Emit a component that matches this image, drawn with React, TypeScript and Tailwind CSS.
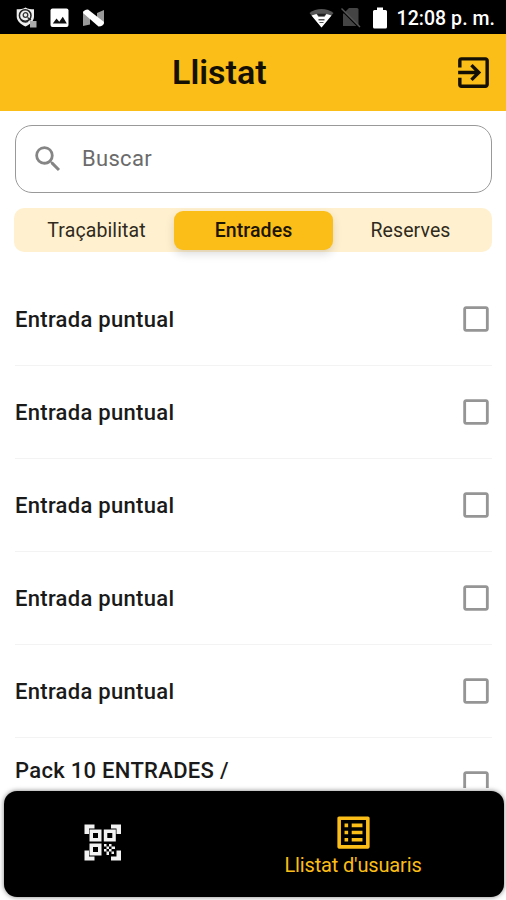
import React from 'react';
import { MdCheckBoxOutlineBlank, MdExitToApp, MdListAlt, MdSearch } from 'react-icons/md';

const tickets = [
  'Entrada puntual',
  'Entrada puntual',
  'Entrada puntual',
  'Entrada puntual',
  'Entrada puntual',
];

const StatusBar: React.FC = () => (
  <div className="flex h-[34px] shrink-0 items-center justify-between bg-black pl-4 pr-[11px] pt-px text-white">
    <div className="flex items-center">
      {/* security shield */}
      <svg className="mt-px h-[22px] w-[22px]" viewBox="0 0 22 22" fill="none">
        <path d="M9.500 0.500C7 2 4 2.200 0.700 2.200v7.500c0 4.300 4.500 7.800 8.800 9.800 4.300-2 8.500-5.500 8.500-9.800V2.200C15 2.200 12 2 9.500 0.500z" fill="#eee" />
        <circle cx="9.200" cy="8.500" r="5.800" stroke="#222" strokeWidth="1.500" />
        <circle cx="9.500" cy="8" r="2.300" stroke="#333" strokeWidth="1.300" />
        <path d="M5 13c2.500 2.500 5 2.500 7 1.500M11.500 10.500l3.500 2.500" stroke="#222" strokeWidth="1.300" />
        <path d="M14 14h6.500v6.500H14z" fill="#aaa" />
      </svg>
      {/* gallery */}
      <svg className="ml-3 h-[20px] w-[20px]" viewBox="0 0 20 20">
        <rect x="0.500" y="0.500" width="18" height="18.500" rx="2" fill="#fff" />
        <path d="M2.800 15.500l3.700-5 2.800 3.200 3.500-5 4 6.800z" fill="#111" />
      </svg>
      {/* Android N */}
      <svg className="ml-[13px] h-[18px] w-[22px]" viewBox="0 0 22 18">
        <path d="M0 2l7 4v9.500L0 17zM14 4l7-3v14.500l-7-3z" fill="#9a9a9a" />
        <path d="M0 4Q0.500 0.500 5 0.500L21 13Q20.500 17.500 15.500 17.500z" fill="#fff" />
      </svg>
    </div>
    <div className="flex items-center">
      {/* wifi */}
      <svg className="h-[20px] w-[25px]" viewBox="0 0 25 20">
        <path d="M0.500 5C7-0.300 18-0.300 24.500 5L12.500 19.500z" fill="#555" />
        <path d="M2.500 7.500L7.500 6l2 2.800h6l2-2.800 5 1.500-10 12z" fill="#fff" />
        <path d="M8 5.800L9.800 8h5.400L17 5.800" fill="#222" />
        <path d="M9.500 11h6v1.500h-6zM10.500 14h4v1h-4z" fill="#555" />
      </svg>
      {/* no sim */}
      <svg className="ml-[7px] h-[21px] w-[20px]" viewBox="0 0 20 21">
        <path d="M8 1h8q1.500 0 1.500 1.500V19H2V7z" fill="#444" />
        <path d="M0.500 3L18.500 21" stroke="#000" strokeWidth="1.500" />
        <path d="M0.500 1.500L19 20" stroke="#555" strokeWidth="1.500" />
      </svg>
      {/* battery */}
      <svg className="ml-[12px] h-[22px] w-[14px]" viewBox="0 0 14 22">
        <path d="M4 0.500h6V3h2.500q1.500 0 1.500 1.500V20q0 1.500-1.500 1.500h-11Q0 21.500 0 20V4.500Q0 3 1.500 3H4z" fill="#fff" />
      </svg>
      <span className="ml-[10px] mt-[3px] whitespace-nowrap text-[19.5px] font-medium leading-none tracking-[0.05px]">12:08 p. m.</span>
    </div>
  </div>
);

const Header: React.FC = () => (
  <div className="flex h-[77px] shrink-0 items-center bg-[#fbbd17] pl-[172px] pr-[12px]">
    <h1 className="-mt-px flex-1 text-[34px] font-semibold leading-none text-[#141003]">Llistat</h1>
    <MdExitToApp className="h-[41px] w-[41px] text-[#141003]" />
  </div>
);

const QrIcon: React.FC = () => (
  <svg className="mb-[3px] h-[37px] w-[38px]" viewBox="0 0 38 37" fill="#f2f2f2">
    <path d="M0.500 0.500H10.500V4.500H5V10h-4.500zM27 0.500H37V10h-4.500V4.500H27zM0.500 26.500H5V32.500H10.500v4H0.500zM32.500 26.500H37v10H27v-4h5.500z" />
    <path fillRule="evenodd" d="M5.500 5.500h12v12h-12zm3.500 3.500v5h5V9zM19.800 5.500h12v12h-12zm3.500 3.500v5h5V9zM5.500 19.500h12v12h-12zm3.500 3.500v5h5v-5z" />
    <path d="M20 20h2.500v2.500H20zM25 20h2.500v2.500H25zM22.500 22.500H25V25h-2.500zM27.500 22.500H31V25h-3.500zM20 25h2.500v2.500H20zM25 25h2.500v2.500H25zM22.500 27.500H25V31h-2.500zM27.500 27.500H30V30h-2.500z" />
  </svg>
);

const App: React.FC = () => {
  return (
    <div className="flex h-[900px] w-[506px] flex-col overflow-hidden bg-white font-['Roboto',sans-serif]">
      <StatusBar />
      <Header />

      <div className="mx-[15px] mt-[14px] flex h-[68px] w-[477px] shrink-0 items-center rounded-[17px] border border-[#999] pl-[15px]">
        <MdSearch className="h-[34px] w-[34px] text-[#858585]" />
        <span className="-mt-[2px] ml-[17px] text-[22px] tracking-[0.3px] text-[#6b6b6b]">Buscar</span>
      </div>

      <div className="mx-[14px] mt-[15px] flex h-[44px] w-[478px] shrink-0 items-center rounded-[10px] bg-[#fff1d0] text-[19.5px] leading-none text-[#302a1c]">
        <div className="w-[160px] pl-[5px] pt-px text-center tracking-[0.1px]">Traçabilitat</div>
        <div className="flex h-[39px] w-[159px] items-center justify-center rounded-[9px] bg-[#fbbd17] pt-px font-medium tracking-[0.1px] text-[#1c1503] shadow-[0_4px_10px_rgba(0,0,0,0.14)]">
          Entrades
        </div>
        <div className="flex-1 pr-1 pt-px text-center tracking-[0.1px]">Reserves</div>
      </div>

      <div className="mt-[21px] h-[515px] shrink-0 overflow-hidden pl-[15px] pr-[14px]">
        {tickets.map((name, i) => (
          <div key={i} className="flex h-[93px] items-center justify-between border-b border-[#f3f3f3]">
            <span className="text-[22px] font-medium tracking-[0.3px] text-[#1a1a1a]">{name}</span>
            <MdCheckBoxOutlineBlank className="-mr-px h-[34px] w-[34px] text-[#959595]" />
          </div>
        ))}
        <div className="flex items-start justify-between">
          <span className="mt-[16px] text-[22px] font-medium tracking-[0.3px] text-[#1a1a1a]">Pack 10 ENTRADES /</span>
          <MdCheckBoxOutlineBlank className="-mr-px mt-[29px] h-[34px] w-[34px] text-[#959595]" />
        </div>
      </div>

      <div className="mb-[3px] ml-1 mr-[2px] mt-[3px] flex h-[106px] shrink-0 rounded-[13px] bg-black shadow-[0_0_5px_rgba(0,0,0,0.5)]">
        <div className="flex w-[198px] items-center justify-center">
          <QrIcon />
        </div>
        <div className="flex w-[302px] flex-col items-center pt-[20px] text-[#fbbd17]">
          <MdListAlt className="h-[43px] w-[43px]" />
          <span className="text-[20px] leading-[23px] tracking-[-0.15px]">Llistat d'usuaris</span>
        </div>
      </div>
    </div>
  );
};

export default App;
